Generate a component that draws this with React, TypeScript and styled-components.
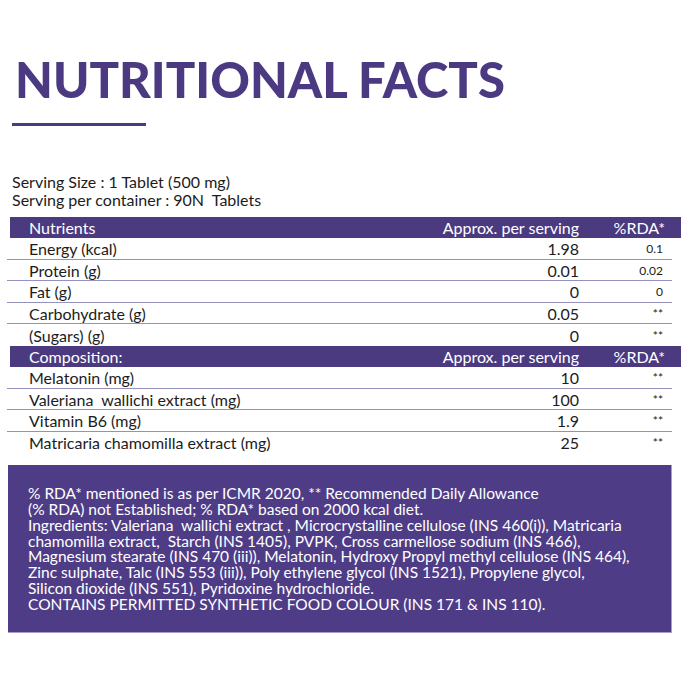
import React from "react";
import styled, { createGlobalStyle } from "styled-components";

const Global = createGlobalStyle`
  html, body { margin: 0; padding: 0; background: #ffffff; }
  body { font-family: Lato, "Open Sans", sans-serif; color: #1c1c1c; }
`;

const Page = styled.div`
  width: 690px;
  height: 700px;
  overflow: hidden;
  display: flex;
  flex-direction: column;
`;

const Title = styled.h1`
  margin: 50px 0 0 15px;
  font-family: Lato, sans-serif;
  font-weight: 900;
  font-size: 49px;
  line-height: 1.2;
  color: #4b3a82;
`;

const Rule = styled.div`
  margin: 14px 0 0 12px;
  width: 134px;
  height: 3px;
  background: #4b3a82;
`;

const Serving = styled.div`
  margin: 47px 0 0 12px;
  font-size: 16px;
  line-height: 18px;
  color: #1c1c1c;
`;

const Table = styled.div`
  margin: 8px 0 0 7px;
  width: 674px;
  display: flex;
  flex-direction: column;
`;

const Row = styled.div<{ $head?: boolean; $last?: boolean }>`
  display: grid;
  box-sizing: border-box;
  height: 21.5px;
  align-items: center;
  font-size: 16px;
  ${(p) =>
    p.$head
      ? `
    margin-left: 3px;
    grid-template-columns: 1fr 200px 86px;
    padding: 0 16px 0 19px;
    background: #4b3a80;
    color: #ffffff;
  `
      : `
    margin-right: 9px;
    grid-template-columns: 1fr 200px 84px;
    padding: 0 9px 0 22px;
    color: #1c1c1c;
    border-bottom: ${p.$last ? "none" : "1.5px solid #9690bd"};
  `}
`;

const Label = styled.span`
  white-space: pre;
`;

const Value = styled.span`
  text-align: right;
  white-space: nowrap;
`;

const Rda = styled.span<{ $head?: boolean }>`
  text-align: right;
  white-space: nowrap;
  font-size: ${(p) => (p.$head ? "16px" : "12px")};
`;

const Note = styled.div`
  margin: 12px 0 0 8px;
  width: 664px;
  height: 168px;
  box-sizing: border-box;
  padding: 21px 6px 0 20px;
  background: #4e3d86;
  border-right: 1px solid #a59ec9;
  border-bottom: 1px solid #a59ec9;
  color: #ffffff;
  font-size: 15.5px;
  line-height: 15.8px;
  white-space: nowrap;
`;

type Item = [string, string, string];

const nutrients: Item[] = [
  ["Energy (kcal)", "1.98", "0.1"],
  ["Protein (g)", "0.01", "0.02"],
  ["Fat (g)", "0", "0"],
  ["Carbohydrate (g)", "0.05", "**"],
  ["(Sugars) (g)", "0", "**"],
];

const composition: Item[] = [
  ["Melatonin (mg)", "10", "**"],
  ["Valeriana  wallichi extract (mg)", "100", "**"],
  ["Vitamin B6 (mg)", "1.9", "**"],
  ["Matricaria chamomilla extract (mg)", "25", "**"],
];

function Section({ title, items }: { title: string; items: Item[] }) {
  return (
    <>
      <Row $head>
        <Label>{title}</Label>
        <Value>Approx. per serving</Value>
        <Rda $head>%RDA*</Rda>
      </Row>
      {items.map((it, i) => (
        <Row key={it[0]} $last={i === items.length - 1}>
          <Label>{it[0]}</Label>
          <Value>{it[1]}</Value>
          <Rda>{it[2]}</Rda>
        </Row>
      ))}
    </>
  );
}

export default function App() {
  return (
    <Page>
      <Global />
      <Title>NUTRITIONAL FACTS</Title>
      <Rule />
      <Serving>
        Serving Size : 1 Tablet (500 mg)
        <br />
        Serving per container : 90N&nbsp; Tablets
      </Serving>
      <Table>
        <Section title="Nutrients" items={nutrients} />
        <Section title="Composition:" items={composition} />
      </Table>
      <Note>
        % RDA* mentioned is as per ICMR 2020, ** Recommended Daily Allowance
        <br />
        (% RDA) not Established; % RDA* based on 2000 kcal diet.
        <br />
        Ingredients: Valeriana&nbsp; wallichi extract , Microcrystalline cellulose (INS 460(i)), Matricaria
        <br />
        chamomilla extract,&nbsp; Starch (INS 1405), PVPK, Cross carmellose sodium (INS 466),
        <br />
        Magnesium stearate (INS 470 (iii)), Melatonin, Hydroxy Propyl methyl cellulose (INS 464),
        <br />
        Zinc sulphate, Talc (INS 553 (iii)), Poly ethylene glycol (INS 1521), Propylene glycol,
        <br />
        Silicon dioxide (INS 551), Pyridoxine hydrochloride.
        <br />
        CONTAINS PERMITTED SYNTHETIC FOOD COLOUR (INS 171 &amp; INS 110).
      </Note>
    </Page>
  );
}
